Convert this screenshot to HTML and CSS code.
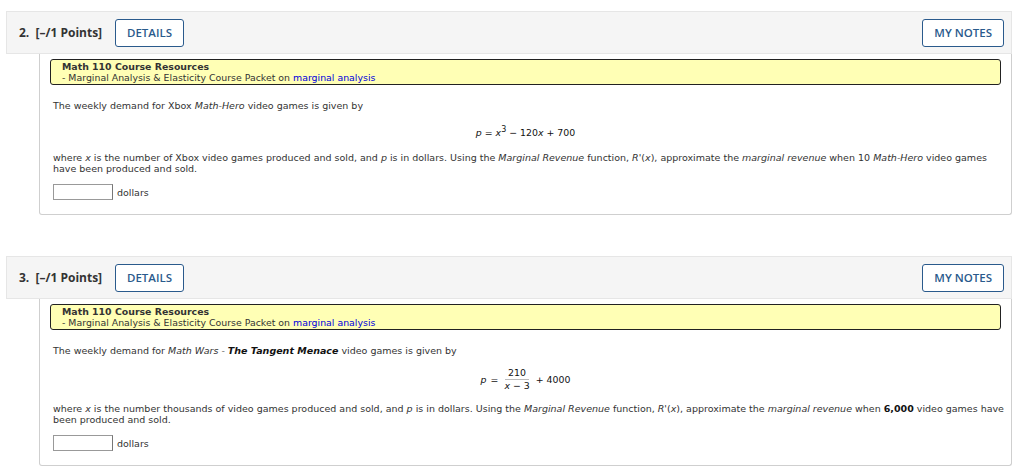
FILE: index.html
```html
<!DOCTYPE html>
<html>
<head>
<meta charset="utf-8">
<link rel="stylesheet" href="styles.css">
</head>
<body>
<div class="page">
  <section class="question">
    <div class="qhead">
      <div class="qnum">2.&nbsp; [–/1 Points]</div>
      <button class="btn">DETAILS</button>
      <div class="spacer"></div>
      <button class="btn">MY NOTES</button>
    </div>
    <div class="qbody">
      <div class="resources">
        <div class="res-title">Math 110 Course Resources</div>
        <div class="res-line">- Marginal Analysis &amp; Elasticity Course Packet on <a class="res-link">marginal analysis</a></div>
      </div>
      <p class="para">The weekly demand for Xbox <i>Math-Hero</i> video games is given by</p>
      <div class="eq eq1"><i>p</i> = <i>x</i><sup>3</sup> − 120<i>x</i> + 700</div>
      <p class="para para2">where <i>x</i> is the number of Xbox video games produced and sold, and <i>p</i> is in dollars. Using the <i>Marginal Revenue</i> function, <i>R'</i>(<i>x</i>), approximate the <i>marginal revenue</i> when 10 <i>Math-Hero</i> video games have been produced and sold.</p>
      <div class="answer"><span class="input"></span><span class="unit">dollars</span></div>
    </div>
  </section>

  <section class="question">
    <div class="qhead">
      <div class="qnum">3.&nbsp; [–/1 Points]</div>
      <button class="btn">DETAILS</button>
      <div class="spacer"></div>
      <button class="btn">MY NOTES</button>
    </div>
    <div class="qbody">
      <div class="resources">
        <div class="res-title">Math 110 Course Resources</div>
        <div class="res-line">- Marginal Analysis &amp; Elasticity Course Packet on <a class="res-link">marginal analysis</a></div>
      </div>
      <p class="para">The weekly demand for <i>Math Wars - </i><b><i>The Tangent Menace</i></b> video games is given by</p>
      <div class="eq eq2"><i>p</i> = <span class="frac"><span class="num">210</span><span class="den"><i>x</i> − 3</span></span> + 4000</div>
      <p class="para para3">where <i>x</i> is the number thousands of video games produced and sold, and <i>p</i> is in dollars. Using the <i>Marginal Revenue</i> function, <i>R'</i>(<i>x</i>), approximate the <i>marginal revenue</i> when <b>6,000</b> video games have been produced and sold.</p>
      <div class="answer answer2"><span class="input"></span><span class="unit">dollars</span></div>
    </div>
  </section>
</div>
</body>
</html>
```
FILE: styles.css
```css
html, body {
  margin: 0;
  padding: 0;
  background: #ffffff;
}
.page {
  padding: 11px 12px 0 6px;
  font-family: "DejaVu Sans", Verdana, sans-serif;
  color: #333333;
}
.question {
  margin-bottom: 41px;
}
.question:last-child {
  margin-bottom: 0;
}
.qhead {
  display: flex;
  align-items: center;
  height: 41px;
  background: #f5f5f5;
  border: 1px solid #e6e6e6;
  padding: 0 7px 0 12px;
}
.qnum {
  font-family: "Open Sans", sans-serif;
  font-weight: 700;
  font-size: 12px;
  color: #333;
  width: 96px;
}
.btn {
  font-family: "Open Sans", sans-serif;
  font-weight: 600;
  font-size: 11.5px;
  color: #2a5a8c;
  background: #ffffff;
  border: 1.5px solid #2a5a8c;
  border-radius: 3px;
  height: 28px;
  padding: 0 11px;
  margin: 0;
}
.spacer {
  flex: 1;
}
.qbody {
  margin-left: 33px;
  border: 1px solid #cfcfcf;
  border-top: none;
  border-radius: 0 0 3px 3px;
  padding: 5px 10px 14px 10px;
}
.resources {
  background: #ffffb5;
  border: 1px solid #222;
  border-radius: 3px;
  padding: 1px 11px 1px 11px;
  font-size: 9.4px;
  line-height: 11px;
}
.res-title {
  font-weight: 700;
  color: #333;
}
.res-line {
  color: #333;
}
.res-link {
  color: #0000dd;
}
.para {
  margin: 15px -5px 0 3px;
  font-size: 9.5px;
  line-height: 11px;
}
.para b {
  color: #111;
}
.para2 {
  margin-top: 13px;
}
.para3 {
  margin-top: 11px;
}
.eq {
  text-align: center;
  font-size: 9.4px;
  color: #111;
}
.eq1 {
  margin-top: 16px;
  line-height: 12px;
}
.eq1 sup {
  font-size: 8px;
  line-height: 0;
  vertical-align: 4px;
}
.eq2 {
  margin-top: 11px;
  display: flex;
  justify-content: center;
  align-items: center;
  gap: 4px;
}
.frac {
  display: inline-flex;
  flex-direction: column;
  align-items: center;
  margin: 0 2px;
}
.frac .num {
  border-bottom: 1px solid #bbb;
  padding: 0 3px 1px;
  line-height: 11px;
}
.frac .den {
  line-height: 12px;
}
.answer {
  margin: 10px 0 0 3px;
  display: flex;
  align-items: center;
  font-size: 9.5px;
}
.answer2 {
  margin-top: 10px;
}
.input {
  display: inline-block;
  width: 58px;
  height: 14px;
  border: 1px solid #999;
  border-right-color: #777;
  background: #fff;
}
.unit {
  margin-left: 4px;
}
```
